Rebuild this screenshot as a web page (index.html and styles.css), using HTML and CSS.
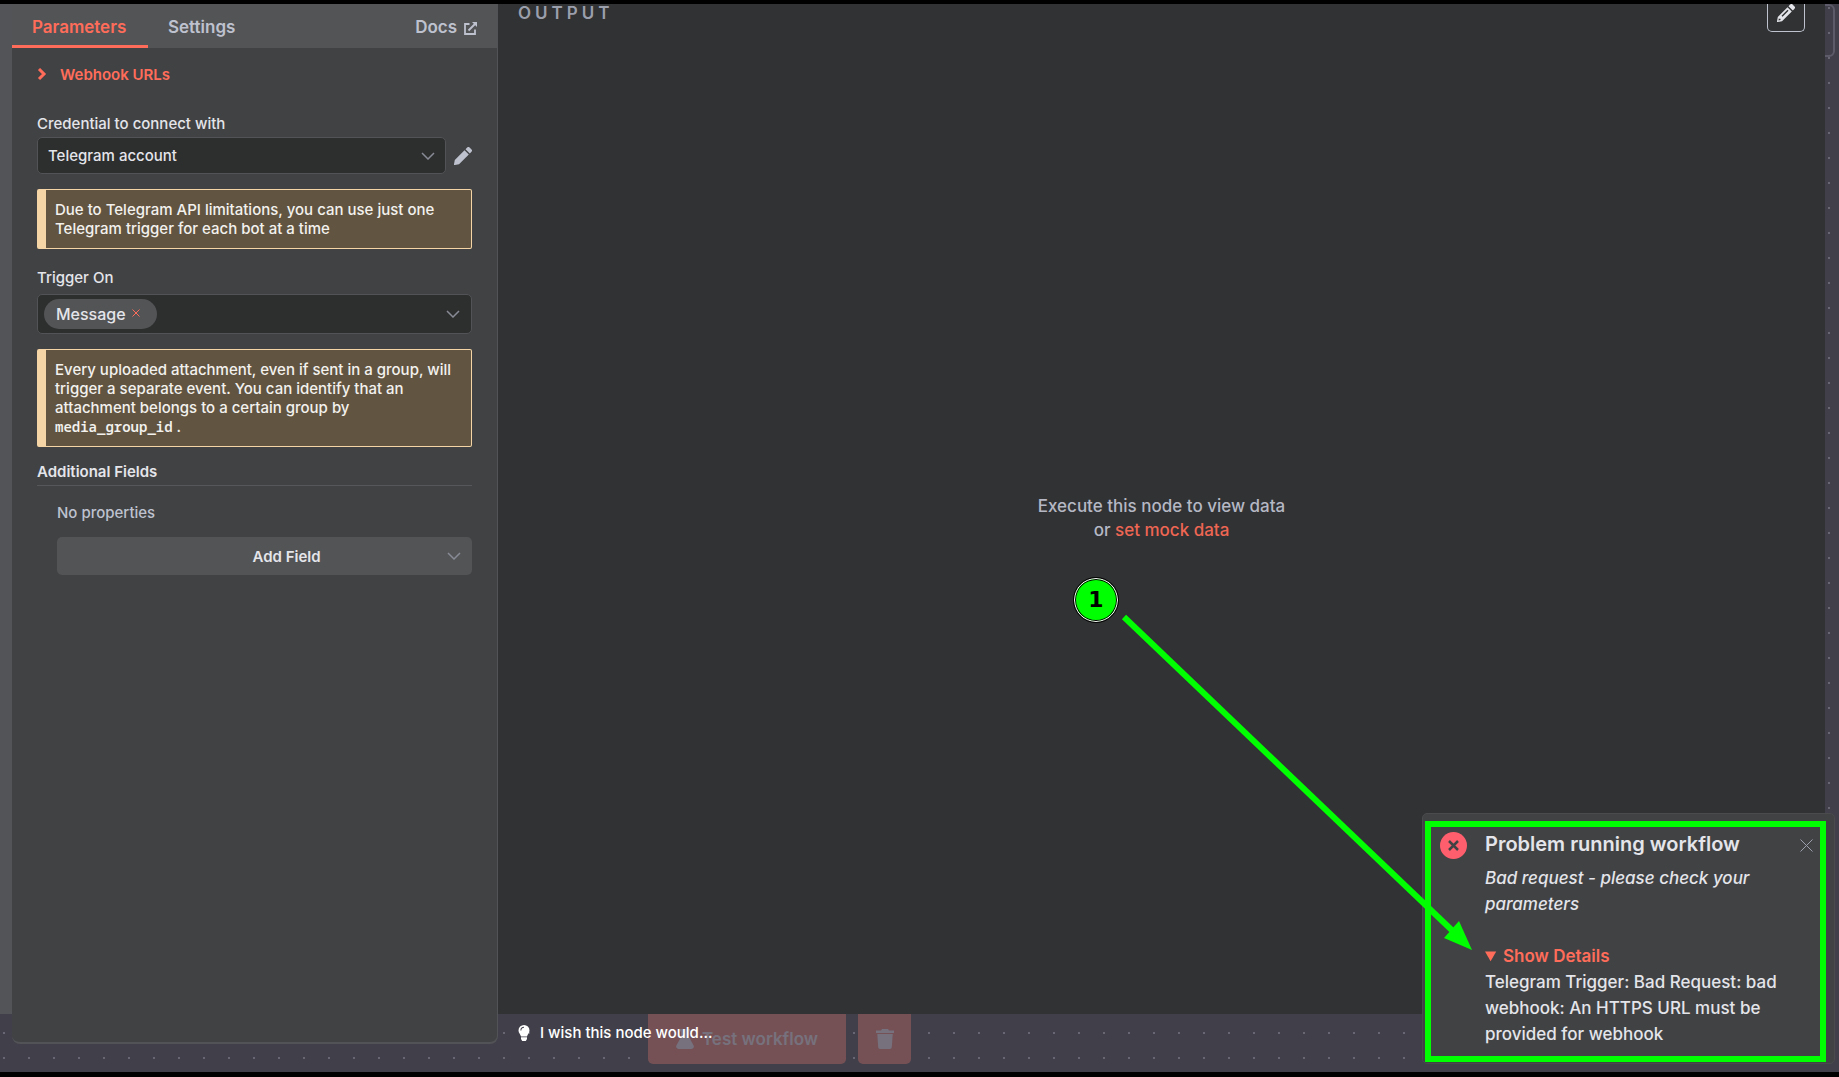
FILE: index.html
```html
<!DOCTYPE html>
<html lang="en">
<head>
<meta charset="utf-8">
<title>Telegram Trigger</title>
<link rel="stylesheet" href="styles.css">
</head>
<body>
<div class="workspace">
  <div class="canvas-control"></div>
  <div class="modal-edge"></div>

  <section class="panel">
    <nav class="tabs">
      <a class="tab tab-active" href="#parameters">Parameters</a>
      <a class="tab" href="#settings">Settings</a>
      <a class="tab tab-docs" href="#docs">Docs
        <svg width="13" height="13" viewBox="0 0 13 13" fill="none" stroke="currentColor" stroke-width="1.800"><path d="M5.500 2H1v10h10V7.500M4.500 8.500L11 2"/><path d="M8 0h5v5z" fill="currentColor" stroke="none"/></svg>
      </a>
    </nav>
    <form class="fields">
      <button class="webhooks" type="button">
        <svg width="10" height="14" viewBox="0 0 10 14" fill="none" stroke="currentColor" stroke-width="3"><path d="M2 1l5 5-5 5"/></svg>
        Webhook URLs
      </button>

      <label class="label" for="credential">Credential to connect with</label>
      <div class="credential-row">
        <div class="select-wrap">
          <select class="select" id="credential"><option>Telegram account</option></select>
          <svg class="chevron" width="14" height="8" viewBox="0 0 14 8"><path d="M1 1l6 6 6-6"/></svg>
        </div>
        <button class="icon-button" type="button" aria-label="Edit credential">
          <svg width="18" height="18" viewBox="0 0 18 18" fill="currentColor"><path d="M10.500 3.200l4.300 4.300L5 17.200l-4.200.8a.7.7 0 0 1-.8-.8l.8-4.200zM11.500 2.200L13.200.5a1.700 1.700 0 0 1 2.400 0l1.900 1.900a1.700 1.700 0 0 1 0 2.400l-1.700 1.700z"/></svg>
        </button>
      </div>

      <p class="notice">Due to Telegram API limitations, you can use just one Telegram trigger for each bot at a time</p>

      <label class="label" for="trigger">Trigger On</label>
      <div class="multi">
        <span class="chip">Message
          <button class="chip-remove" type="button" aria-label="Remove Message"><svg width="8" height="8" viewBox="0 0 8 8"><path d="M.5.5l7 7M7.500.5l-7 7"/></svg></button>
        </span>
        <input class="multi-input" id="trigger" type="text">
        <svg class="chevron" width="14" height="8" viewBox="0 0 14 8"><path d="M1 1l6 6 6-6"/></svg>
      </div>

      <p class="notice">Every uploaded attachment, even if sent in a group, will trigger a separate event. You can identify that an attachment belongs to a certain group by <code>media_group_id</code> .</p>

      <h2 class="section-title">Additional Fields</h2>
      <div class="collection">
        <p class="empty-note">No properties</p>
        <button class="add-field" type="button">Add Field
          <svg class="chevron" width="14" height="8" viewBox="0 0 14 8"><path d="M1 1l6 6 6-6"/></svg>
        </button>
      </div>
    </form>
  </section>

  <main class="main">
    <section class="output">
      <header class="output-head">
        <h1 class="output-title">OUTPUT</h1>
        <button class="edit-output" type="button" aria-label="Edit output">
          <svg width="18" height="18" viewBox="0 0 18 18" fill="currentColor"><path fill-rule="evenodd" d="M10.500 3.200l4.300 4.300L5 17.200l-4.200.8a.7.7 0 0 1-.8-.8l.8-4.200zM4.500 11.800l1 .9 6-6-1-.9zM1.800 14.500l-.3 2 2-.4v-1.300H2.300z"/><path d="M11.500 2.200L13.200.5a1.700 1.700 0 0 1 2.400 0l1.900 1.900a1.700 1.700 0 0 1 0 2.400l-1.700 1.700z"/></svg>
        </button>
      </header>
      <div class="output-empty">
        <p>Execute this node to view data<br>or <a href="#mock">set mock data</a></p>
      </div>
    </section>
    <footer class="footer">
      <div class="canvas-actions">
        <button class="canvas-button" type="button">
          <svg width="18" height="20" viewBox="0 0 18 20" fill="currentColor"><path d="M4 0h10v2.500h-1V8l4.600 8.500A2.400 2.400 0 0 1 15.500 20h-13A2.400 2.400 0 0 1 .4 16.500L5 8V2.500H4z"/></svg>
          Test workflow
        </button>
        <button class="canvas-button canvas-button-icon" type="button" aria-label="Delete execution data">
          <svg width="18" height="20" viewBox="0 0 18 20" fill="currentColor"><path d="M0 1.500h5L6 0h6l1 1.500h5V4H0zM1.300 5h15.400l-.9 13.200A2 2 0 0 1 13.900 20H4.100a2 2 0 0 1-1.900-1.800z"/></svg>
        </button>
      </div>
      <a class="wish" href="#wish">
        <svg width="12" height="16" viewBox="0 0 12 16" fill="currentColor"><path fill-rule="evenodd" d="M6 0a5.500 5.500 0 0 1 5.500 5.500c0 2.600-2 3.700-2.500 6H3C2.500 9.200.5 8.100.5 5.500A5.500 5.500 0 0 1 6 0zM6 1.800A3.600 3.600 0 0 0 2.400 5.400h1A2.600 2.600 0 0 1 6 2.800z"/><path d="M3 12.300h6V14l-1.200 2H4.200L3 14z"/></svg>
        I wish this node would...
      </a>
    </footer>
  </main>

  <aside class="toast" role="alert">
    <svg class="toast-icon" width="27" height="27" viewBox="0 0 27 27"><circle cx="13.500" cy="13.500" r="13.500" fill="#ff5f6d"/><path d="M9 9l9 9M18 9l-9 9" stroke="#414244" stroke-width="2.500"/></svg>
    <div class="toast-body">
      <h2 class="toast-title">Problem running workflow</h2>
      <p class="toast-message">Bad request - please check your parameters</p>
      <details open>
        <summary>Show Details</summary>
        <p>Telegram Trigger: Bad Request: bad webhook: An HTTPS URL must be provided for webhook</p>
      </details>
    </div>
    <button class="toast-close" type="button" aria-label="Close"><svg width="13" height="13" viewBox="0 0 13 13"><path d="M.5.5l12 12M12.500.5l-12 12"/></svg></button>
    <div class="highlight"></div>
    <svg class="arrow" width="360" height="345" viewBox="0 0 360 345"><path d="M4 6L338 325" stroke="#0f0" stroke-width="6"/><path d="M352 339l-28-12 15-17z" fill="#0f0"/></svg>
    <span class="marker">1</span>
  </aside>
</div>
</body>
</html>
```
FILE: styles.css
```css
* {
  box-sizing: border-box;
}

body {
  margin: 0;
  padding: 4px 0 5px;
  height: 100vh;
  background: #000;
  color: #e4e5ea;
  font: 500 15px/19px Inter, "Liberation Sans", sans-serif;
}

h1, h2, p {
  margin: 0;
}

button, input, select {
  font: inherit;
  color: inherit;
  border: 0;
  background: none;
  padding: 0;
}

a {
  color: inherit;
  text-decoration: none;
}

.workspace {
  position: relative;
  display: flex;
  height: 100%;
  padding-right: 14px;
  overflow: hidden;
  background: radial-gradient(circle at 12px 12px, #686672 1px, transparent 1px) -8px -8px / 25px 25px #413f4a;
}

.canvas-control {
  position: absolute;
  top: 0;
  right: 4px;
  width: 40px;
  height: 53px;
  border: 2px solid #5d5b69;
  border-radius: 6px;
}

.modal-edge {
  width: 12px;
  margin-bottom: 58px;
  background: #535458;
}

/* Node parameters */

.panel {
  width: 486px;
  margin-bottom: 28px;
  position: relative;
  background: #414244;
  border: solid #525356;
  border-width: 0 1px 2px 0;
  border-radius: 0 0 8px 8px;
}

.tabs {
  display: flex;
  height: 44px;
  padding-right: 20px;
  background: #535456;
  color: #bec2cf;
  font-size: 17px;
  font-weight: 600;
}

.tab {
  padding: 14px 20px 0;
  height: 44px;
}

.tab-active {
  min-width: 136px;
  color: #ff6d5a;
  border-bottom: 3px solid #ff6d5a;
}

.tab-docs {
  display: flex;
  gap: 7px;
  margin-left: auto;
  padding-right: 0;
}

.tab-docs svg {
  margin-top: 4px;
}

.fields {
  padding: 17px 25px 0;
}

.webhooks {
  display: flex;
  gap: 13px;
  align-items: center;
  margin-bottom: 30px;
  color: #ff6d5a;
  font-weight: 600;
}

.label {
  display: block;
  height: 23px;
}

.notice + .label {
  height: 26px;
  margin-top: 19px;
}

.credential-row {
  display: flex;
  gap: 8px;
  align-items: center;
  margin-bottom: 15px;
}

.select-wrap {
  flex: 1;
  display: flex;
  align-items: center;
  position: relative;
}

.select {
  appearance: none;
  width: 100%;
  height: 37px;
  padding: 0 10px 1px;
}

.select, .multi {
  background: #2d2e2e;
  border: 1px solid #525356;
  border-radius: 5px;
}

.chevron {
  fill: none;
  stroke: #888b95;
  stroke-width: 1.500px;
}

.select-wrap .chevron, .add-field .chevron {
  position: absolute;
  right: 11px;
}

.icon-button {
  display: flex;
  color: #bec2cf;
}

.notice {
  margin-bottom: 15px;
  padding: 10px 16px 10px 9px;
  background: #615541;
  border: 1px solid #f5d5a5;
  border-left-width: 9px;
  border-radius: 2px;
  color: #f3f1ee;
}

.notice code {
  font: 600 14px/14px "Noto Sans Mono", "DejaVu Sans Mono", monospace;
}

.multi {
  display: flex;
  align-items: center;
  height: 40px;
  margin-bottom: 15px;
  padding: 0 11px 0 6px;
}

.chip {
  display: flex;
  gap: 6px;
  align-items: center;
  height: 30px;
  padding: 0 17px 0 12px;
  border-radius: 15px;
  background: #535456;
  font-size: 16px;
}

.chip-remove {
  display: flex;
  margin-bottom: 3px;
  stroke: #ff6d5a;
}

.multi-input {
  flex: 1;
  min-width: 0;
}

.section-title {
  padding-bottom: 4px;
  border-bottom: 1px solid #56575a;
  font-size: 15px;
  font-weight: 600;
}

.collection {
  padding: 17px 0 0 20px;
}

.empty-note {
  margin-bottom: 15px;
  color: #bec2cf;
}

.add-field {
  position: relative;
  display: flex;
  align-items: center;
  justify-content: center;
  width: 100%;
  height: 38px;
  padding-left: 44px;
  border-radius: 5px;
  background: #535456;
  font-weight: 600;
}

/* Output */

.main {
  flex: 1;
  display: flex;
  flex-direction: column;
}

.output {
  flex: 1;
  display: flex;
  flex-direction: column;
  background: #313233;
  position: relative;
}

.output-head {
  display: flex;
  justify-content: space-between;
  height: 18px;
  padding: 0 20px;
}

.output-title {
  color: #9b9fac;
  font-size: 17px;
  line-height: 18px;
  font-weight: 600;
  letter-spacing: 4px;
}

.edit-output {
  display: flex;
  justify-content: center;
  width: 38px;
  height: 28px;
  border: solid #bec2cf;
  border-width: 0 1px 1px;
  border-radius: 0 0 5px 5px;
}

.output-empty {
  flex: 1;
  display: grid;
  place-items: center;
  text-align: center;
  color: #b5b8c4;
  font-size: 17px;
  line-height: 24px;
}

.output-empty a {
  color: #ee6654;
}

.footer {
  position: relative;
  height: 58px;
  padding: 9px 20px;
}

.wish {
  position: relative;
  display: flex;
  gap: 10px;
  align-items: center;
  color: #fff;
}

.canvas-actions {
  position: absolute;
  top: 0;
  left: 150px;
  display: flex;
  gap: 12px;
}

.canvas-button {
  display: flex;
  gap: 8px;
  align-items: center;
  justify-content: center;
  width: 198px;
  height: 50px;
  border-radius: 0 0 5px 5px;
  background: #755156;
  color: #77717d;
  font-size: 17px;
  font-weight: 600;
}

.canvas-button-icon {
  width: 53px;
}

/* Error notification and its annotation */

.toast {
  position: absolute;
  right: 4px;
  bottom: 8px;
  display: flex;
  width: 413px;
  padding: 17px 22px 16px 17px;
  border: 1px solid #4a4b4d;
  border-radius: 5px;
  background: #414244;
  font-size: 17px;
  line-height: 26px;
}

.toast-icon {
  margin: 1px 18px 0 0;
}

.toast-body {
  flex: 1;
}

.toast-title {
  margin-bottom: 8px;
  font-size: 20px;
  line-height: 26px;
  font-weight: 600;
}

.toast-message {
  margin-bottom: 26px;
  font-style: italic;
}

.toast summary {
  color: #ff6d5a;
  font-weight: 600;
}

.toast-close {
  position: absolute;
  top: 25px;
  right: 21px;
  display: flex;
  stroke: #9b9fac;
}

.highlight {
  position: absolute;
  inset: 7px 8px 1px 2px;
  border: 6px solid #0f0;
}

.arrow {
  position: absolute;
  right: 354px;
  bottom: 107px;
}

.marker {
  position: absolute;
  right: 716px;
  bottom: 441px;
  width: 44px;
  height: 44px;
  border: 1px solid #fff;
  outline: 1px solid #000;
  box-shadow: inset 0 0 0 1px #000;
  border-radius: 50%;
  background: #0f0;
  color: #000;
  font: 700 22px/42px "DejaVu Sans", sans-serif;
  text-align: center;
}
```
